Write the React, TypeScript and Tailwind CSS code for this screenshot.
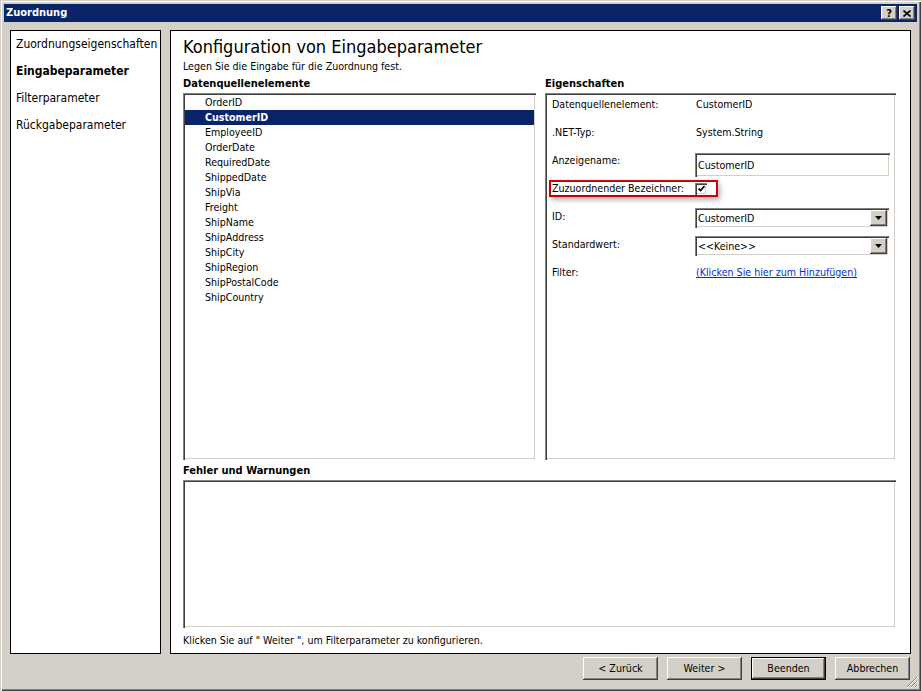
const items = [
  'OrderID',
  'CustomerID',
  'EmployeeID',
  'OrderDate',
  'RequiredDate',
  'ShippedDate',
  'ShipVia',
  'Freight',
  'ShipName',
  'ShipAddress',
  'ShipCity',
  'ShipRegion',
  'ShipPostalCode',
  'ShipCountry',
];

const inset =
  'bg-white shadow-[inset_1px_1px_0_#808080,inset_2px_2px_0_#404040,inset_-1px_-1px_0_#ffffff,inset_-2px_-2px_0_#d4d0c8]';
const raised =
  'bg-[#d4d0c8] shadow-[inset_-1px_-1px_0_#404040,inset_1px_1px_0_#ffffff,inset_-2px_-2px_0_#808080]';

function DropArrow() {
  return (
    <div className={`${raised} w-[17px] h-[16px] flex items-center justify-center`}>
      <svg width="7" height="4" viewBox="0 0 7 4">
        <path d="M0 0h7L3.5 4z" fill="#000" />
      </svg>
    </div>
  );
}

function Select({ value }: { value: string }) {
  return (
    <div className={`${inset} w-[194px] h-[20px] -mt-[1px] flex items-center justify-between pl-[3px] pr-[2px]`}>
      <span>{value}</span>
      <DropArrow />
    </div>
  );
}

function Button({ label, primary }: { label: string; primary?: boolean }) {
  return (
    <div
      className={`w-[75px] h-[23px] flex items-center justify-center ${
        primary
          ? 'bg-[#d4d0c8] border border-black shadow-[inset_-1px_-1px_0_#404040,inset_1px_1px_0_#ffffff,inset_-2px_-2px_0_#808080]'
          : raised
      }`}
    >
      {label}
    </div>
  );
}

export default function App() {
  return (
    <div className="relative w-[921px] h-[691px] bg-[#d4d0c8] p-[4px] flex flex-col text-[10.6px] text-black font-['DejaVu_Sans_Condensed','DejaVu_Sans',sans-serif] shadow-[inset_1px_1px_0_#d4d0c8,inset_2px_2px_0_#ffffff,inset_-1px_-1px_0_#404040,inset_-2px_-2px_0_#808080]">
      {/* title bar */}
      <div className="h-[18px] bg-[#0a246a] flex items-center justify-between pl-[2px] pr-[2px]">
        <span className="text-white font-bold text-[11px]">Zuordnung</span>
        <div className="flex gap-[2px]">
          <div className={`${raised} w-[16px] h-[14px] flex items-center justify-center font-bold text-[11px] leading-none`}>?</div>
          <div className={`${raised} w-[16px] h-[14px] flex items-center justify-center`}>
            <svg width="8" height="7" viewBox="0 0 8 7">
              <path d="M0.5 0.5l7 6M7.5 0.5l-7 6" stroke="#000" strokeWidth="1.6" />
            </svg>
          </div>
        </div>
      </div>

      {/* panels */}
      <div className="flex mt-[8px] px-[6px] gap-[9px] h-[624px]">
        <div className="w-[151px] bg-white border border-black pt-[5px] pl-[5px] text-[12px]">
          <div className="h-[27px] leading-[16px]">Zuordnungseigenschaften</div>
          <div className="h-[27px] leading-[16px] font-bold">Eingabeparameter</div>
          <div className="h-[27px] leading-[16px]">Filterparameter</div>
          <div className="h-[27px] leading-[16px]">Rückgabeparameter</div>
        </div>

        <div className="flex-1 bg-white border border-black pt-[4px] pl-[12px] pr-[14px] flex flex-col">
          <div className="h-[24px] leading-[24px] text-[18px]">Konfiguration von Eingabeparameter</div>
          <div className="h-[14px] leading-[14px]">Legen Sie die Eingabe für die Zuordnung fest.</div>

          <div className="flex gap-[9px] mt-[4px]">
            <div className="w-[353px] flex flex-col">
              <div className="h-[14px] leading-[14px] font-bold text-[11px]">Datenquellenelemente</div>
              <div className={`${inset} mt-[2px] h-[367px] pt-[2px]`}>
                {items.map((it) => (
                  <div
                    key={it}
                    className={`h-[15px] leading-[15px] mx-[2px] pl-[20px] ${
                      it === 'CustomerID' ? 'bg-[#0a246a] text-white font-bold' : ''
                    }`}
                  >
                    {it}
                  </div>
                ))}
              </div>
            </div>

            <div className="flex-1 flex flex-col">
              <div className="h-[14px] leading-[14px] font-bold text-[11px]">Eigenschaften</div>
              <div className={`${inset} mt-[2px] h-[367px] pt-[4px] pl-[7px]`}>
                <div className="h-[28px] flex leading-[14px]">
                  <div className="w-[144px]">Datenquellenelement:</div>
                  <div>CustomerID</div>
                </div>
                <div className="h-[28px] flex leading-[14px]">
                  <div className="w-[144px]">.NET-Typ:</div>
                  <div>System.String</div>
                </div>
                <div className="h-[28px] flex leading-[14px]">
                  <div className="w-[143px]">Anzeigename:</div>
                  <div className={`${inset} w-[195px] h-[24px] flex items-center pl-[3px]`}>CustomerID</div>
                </div>
                <div className="h-[28px] flex items-start">
                  <div className="-ml-[3px] -mt-[1px] flex items-center border-2 border-[#cc0000] pl-[1px] pr-[9px] shadow-[2px_3px_5px_rgba(0,0,0,0.3)]">
                    <div className="w-[143px] h-[13px] leading-[13px]">Zuzuordnender Bezeichner:</div>
                    <div className={`${inset} w-[12px] h-[12px] flex items-center justify-center`}>
                      <svg width="7" height="7" viewBox="0 0 7 7">
                        <path d="M0.5 3.5l2 2 4-4.5" stroke="#000" strokeWidth="1.7" fill="none" />
                      </svg>
                    </div>
                  </div>
                </div>
                <div className="h-[28px] flex leading-[14px]">
                  <div className="w-[143px]">ID:</div>
                  <Select value="CustomerID" />
                </div>
                <div className="h-[28px] flex leading-[14px]">
                  <div className="w-[143px]">Standardwert:</div>
                  <Select value="<<Keine>>" />
                </div>
                <div className="h-[28px] flex leading-[14px]">
                  <div className="w-[144px]">Filter:</div>
                  <div className="text-[#0033cc] underline">(Klicken Sie hier zum Hinzufügen)</div>
                </div>
              </div>
            </div>
          </div>

          <div className="h-[14px] leading-[14px] font-bold text-[11px] mt-[4px]">Fehler und Warnungen</div>
          <div className={`${inset} mt-[2px] h-[148px]`} />
          <div className="h-[14px] leading-[14px] mt-[5px]">
            Klicken Sie auf " Weiter ", um Filterparameter zu konfigurieren.
          </div>
        </div>
      </div>

      {/* buttons */}
      <div className="flex justify-end gap-[9px] mt-[3px] pr-[7px]">
        <Button label="< Zurück" />
        <Button label="Weiter >" />
        <Button label="Beenden" primary />
        <Button label="Abbrechen" />
      </div>

      <svg className="absolute right-[3px] bottom-[3px]" width="12" height="12" viewBox="0 0 12 12">
        <path d="M11 1L1 11M11 5L5 11M11 9L9 11" stroke="#808080" strokeWidth="1" />
        <path d="M12 1L1 12M12 5L5 12M12 9L9 12" stroke="#ffffff" strokeWidth="1" />
      </svg>
    </div>
  );
}
